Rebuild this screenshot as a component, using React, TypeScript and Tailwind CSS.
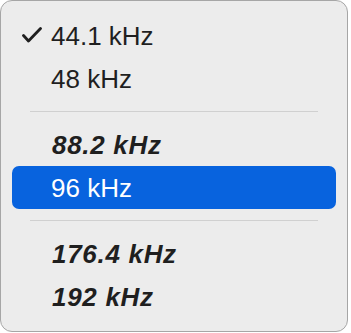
const ITEMS: ({ label: string; checked?: boolean; bold?: boolean; active?: boolean } | 'sep')[] = [
  { label: '44.1 kHz', checked: true },
  { label: '48 kHz' },
  'sep',
  { label: '88.2 kHz', bold: true },
  { label: '96 kHz', active: true },
  'sep',
  { label: '176.4 kHz', bold: true },
  { label: '192 kHz', bold: true },
]

export default function App() {
  return (
    <div className="w-[351px] h-[333px] bg-white" style={{ fontFamily: '"Liberation Sans", Arial, sans-serif' }}>
      <div className="w-[348px] h-[332px] rounded-[12px] border border-[#a6a6a6] bg-[#ececec] pt-[13px]">
        {ITEMS.map((item, i) =>
          item === 'sep' ? (
            <div key={i} className="h-[23px] flex items-center px-[29px]">
              <div className="h-px w-full bg-[#d0d0d0]" />
            </div>
          ) : (
            <div
              key={i}
              className={`mx-[11px] h-[43px] rounded-[7px] flex items-center text-[26px] leading-none ${
                item.active ? 'bg-[#0863de] text-white' : 'text-[#1f1f1f]'
              } ${item.bold ? 'font-bold italic tracking-[0.7px]' : ''}`}
            >
              <span className="w-[39px] shrink-0 flex justify-end pr-[9px]">
                {item.checked && (
                  <svg width="20" height="16" viewBox="0 0 20 16" className="-mt-[1px]">
                    <polyline points="1.5,8.5 6.5,14 18.5,1.5" fill="none" stroke="#1f1f1f" strokeWidth="2.8" strokeLinecap="round" strokeLinejoin="round" />
                  </svg>
                )}
              </span>
              <span className={item.bold ? 'pl-[1px]' : ''}>{item.label}</span>
            </div>
          )
        )}
      </div>
    </div>
  )
}
